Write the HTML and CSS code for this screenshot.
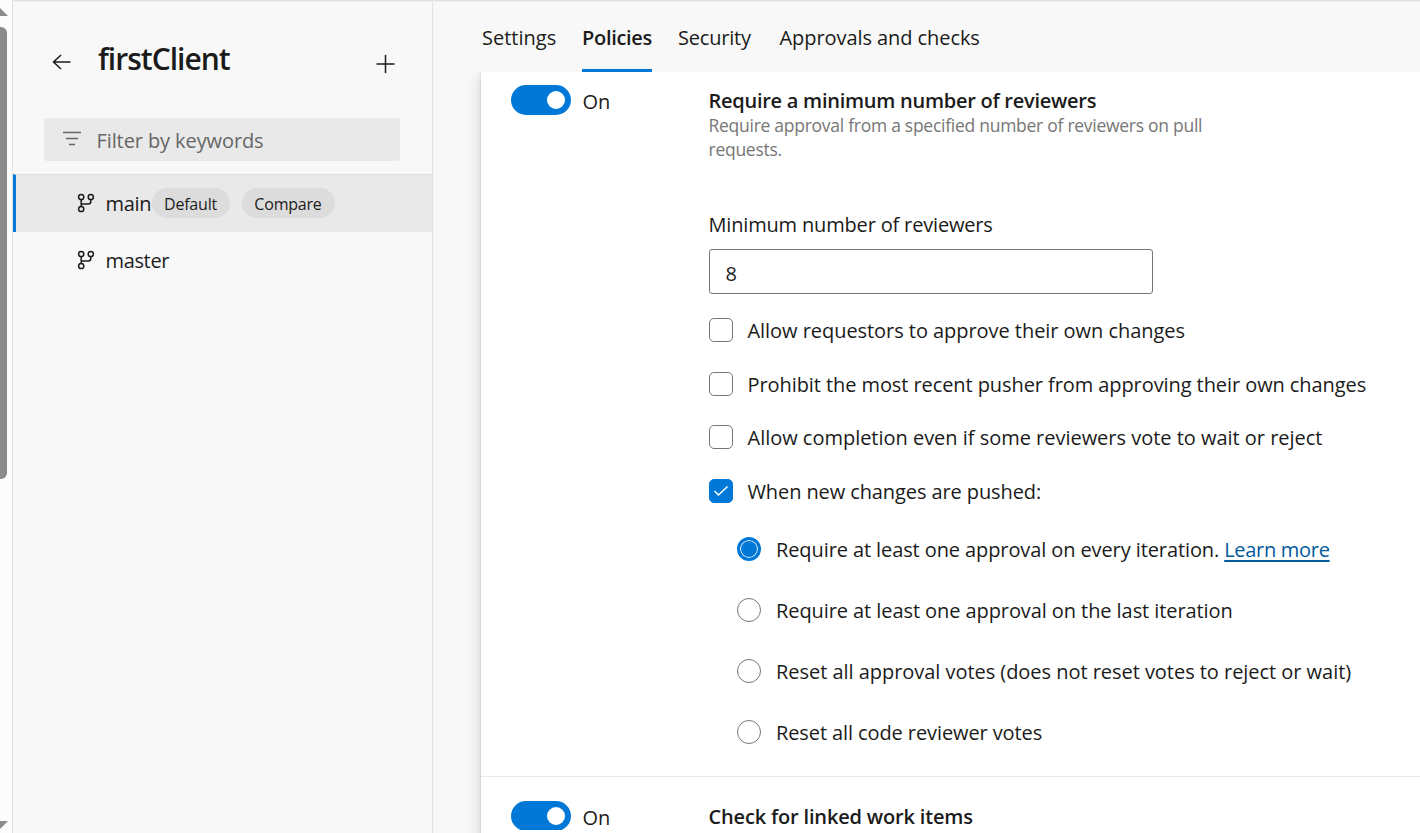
FILE: index.html
```
<!DOCTYPE html>
<html lang="en">
<head>
<meta charset="utf-8">
<title>firstClient - Branch policies</title>
<link rel="stylesheet" href="styles.css">
</head>
<body>
<div class="app">
  <div class="scrollbar">
    <svg class="scroll-up" width="8" height="8" viewBox="0 0 8 8"><path d="M0 0L8 8H0Z"/></svg>
    <div class="scroll-thumb"></div>
    <svg class="scroll-down" width="8" height="8" viewBox="0 0 8 8"><path d="M0 0H8L0 8Z"/></svg>
  </div>
  <aside class="sidebar">
    <header class="side-header">
      <svg class="back" width="20" height="16" viewBox="0 0 20 16"><path d="M18.5 8H1.5M9 1L1.5 8L9 15"/></svg>
      <h1 class="title"><span>firstClient</span></h1>
      <svg class="plus" width="20" height="20" viewBox="0 0 20 20"><path d="M.5 10H18.5M9.5 1V19"/></svg>
    </header>
    <div class="filter">
      <svg class="filter-icon" width="20" height="16" viewBox="0 0 20 16"><path d="M1 1.5H19M4 7.5H16M7 13.5H13"/></svg>
      <span class="placeholder">Filter by keywords</span>
    </div>
    <ul class="branches">
      <li class="branch selected">
        <svg class="branch-icon" width="18" height="20" viewBox="0 0 18 20"><circle cx="4.2" cy="4" r="2.6"/><circle cx="13.8" cy="4" r="2.6"/><circle cx="4.2" cy="16" r="2.6"/><path d="M4.2 6.7V13.3M13.8 6.7V8.5Q13.8 11 11.3 11H4.2"/></svg>
        <span class="branch-name main">main</span>
        <span class="pill default"><span>Default</span></span>
        <span class="pill compare"><span>Compare</span></span>
      </li>
      <li class="branch">
        <svg class="branch-icon" width="18" height="20" viewBox="0 0 18 20"><circle cx="4.2" cy="4" r="2.6"/><circle cx="13.8" cy="4" r="2.6"/><circle cx="4.2" cy="16" r="2.6"/><path d="M4.2 6.7V13.3M13.8 6.7V8.5Q13.8 11 11.3 11H4.2"/></svg>
        <span class="branch-name">master</span>
      </li>
    </ul>
  </aside>
  <main class="main-area">
    <nav class="tabs">
      <a class="tab settings">Settings</a>
      <a class="tab policies">Policies</a>
      <a class="tab security">Security</a>
      <a class="tab approvals">Approvals and checks</a>
    </nav>
    <div class="viewport">
      <div class="panel">
        <section class="policy">
          <div class="toggle-col"><span class="toggle"></span><span class="on">On</span></div>
          <div class="policy-body">
            <h2 class="policy-title minimum">Require a minimum number of reviewers</h2>
            <p class="desc">Require approval from a specified number of reviewers on pull<br>requests.</p>
            <label class="field-label">Minimum number of reviewers</label>
            <div class="number">8</div>
            <div class="checks">
              <div class="check"><span class="box"></span><span class="c1">Allow requestors to approve their own changes</span></div>
              <div class="check"><span class="box"></span><span class="c2">Prohibit the most recent pusher from approving their own changes</span></div>
              <div class="check"><span class="box"></span><span class="c3">Allow completion even if some reviewers vote to wait or reject</span></div>
              <div class="check"><span class="box checked"><svg width="16" height="12" viewBox="0 0 16 12"><path d="M1.5 6L5.5 10L14.5 1.5"/></svg></span><span class="c4">When new changes are pushed:</span></div>
            </div>
            <div class="radios">
              <div class="radio"><span class="ring active"></span><span class="r1">Require at least one approval on every iteration. <a class="link">Learn more</a></span></div>
              <div class="radio"><span class="ring"></span><span class="r2">Require at least one approval on the last iteration</span></div>
              <div class="radio"><span class="ring"></span><span class="r3">Reset all approval votes (does not reset votes to reject or wait)</span></div>
              <div class="radio"><span class="ring"></span><span class="r4">Reset all code reviewer votes</span></div>
            </div>
          </div>
        </section>
        <section class="policy linked">
          <div class="toggle-col"><span class="toggle"></span><span class="on">On</span></div>
          <div class="policy-body"><h2 class="policy-title check-linked">Check for linked work items</h2></div>
        </section>
      </div>
    </div>
  </main>
</div>
</body>
</html>
```
FILE: styles.css
```
* { box-sizing: border-box; }
body { margin: 0; background: #f8f8f8; color: #1b1b1b; font: 20px/28px "Open Sans", "Noto Sans", sans-serif; letter-spacing: -0.1px; }
h1, h2, p, ul { margin: 0; padding: 0; }
svg { display: block; flex: none; fill: none; stroke: #1b1b1b; stroke-width: 1.5; }
span, a, label { white-space: nowrap; }
.app { display: flex; width: 1420px; height: 833px; overflow: hidden; box-shadow: inset 0 1px #e0e0e0, inset 0 2px #f0f0f0; }
.scrollbar { width: 13px; flex: none; display: flex; flex-direction: column; padding-top: 8px; background: #fcfcfc; border-right: 1px solid #e1e1e1; }
.scrollbar svg { fill: #8b8b8b; stroke: none; }
.scroll-thumb { width: 7px; height: 452px; margin-top: 11px; background: #8b8b8b; border-radius: 0 6px 6px 0; }
.scroll-down { margin-top: 342px; }

.sidebar { width: 420px; flex: none; border-right: 1px solid #e1e1e1; }
.side-header { display: flex; height: 118px; padding-left: 39px; }
.back { margin-top: 54px; }
.title { width: 277px; margin: 38px 0 0 26px; font-size: 30px; line-height: 42px; font-weight: 600; letter-spacing: -1px; }
.plus { margin: 54px 0 0 1px; }
.filter { display: flex; align-items: center; width: 356px; height: 43px; margin-left: 31px; padding: 0 0 0 18px; background: #e9e9e9; border-radius: 3px; color: #666; }
.filter-icon { stroke: #666; margin-top: -2px; }
.placeholder { margin: 2px 0 0 14.5px; }
.branches { margin-top: 13px; list-style: none; }
.branch { display: flex; align-items: center; height: 56px; padding-left: 64px; }
.branch.selected { height: 58px; padding-left: 61px; background: #e9e9e9; border-top: 1px solid #e0e0e0; border-left: 3px solid #0078d7; }
.branch-icon { margin-top: -1px; }
.branch-name { margin: 2px 0 0 10.5px; letter-spacing: -.35px; }
.branch-name.main { width: 46px; margin-top: 1px; }
.pill { display: flex; justify-content: center; align-items: center; height: 30px; border-radius: 15px; background: #dcdcdc; font-size: 16px; margin-top: -1px; }
.pill span { margin-top: 2px; }
.default { width: 78px; letter-spacing: -.2px; }
.compare { width: 93px; margin-left: 12px; letter-spacing: -.2px; }

.main-area { flex: 1; display: flex; flex-direction: column; min-width: 0; }
.tabs { display: flex; height: 72px; flex: none; padding: 24px 0 0 49px; }
.tab { height: 48px; flex: none; }
.settings { width: 100px; letter-spacing: 0; }
.policies { width: 70px; margin-right: 26px; font-weight: 600; letter-spacing: -.3px; border-bottom: 3px solid #0078d7; }
.security { width: 101.5px; letter-spacing: -.2px; }
.approvals { letter-spacing: -.07px; }
.viewport { flex: 1; overflow: hidden; padding-left: 48px; }
.panel { height: 800px; background: #fff; box-shadow: 0 4px 14px rgba(0,0,0,.16), 0 0 2px rgba(0,0,0,.18); }
.policy { display: flex; height: 705px; padding: 13px 0 0 30px; border-bottom: 1px solid #e9e9e9; }
.policy.linked { padding-top: 24px; border: 0; }
.linked .toggle { clip-path: inset(0 0 1px 0); }
.toggle-col { display: flex; align-items: flex-start; width: 197.5px; flex: none; }
.toggle { width: 60px; height: 30px; border-radius: 15px; background: #0078d7; display: flex; justify-content: flex-end; align-items: center; padding-right: 6px; }
.toggle::after { content: ""; width: 18px; height: 18px; border-radius: 50%; background: #fff; }
.on { margin: 3px 0 0 11.5px; }
.policy-title { font-size: 20px; line-height: 28px; font-weight: 600; margin-top: 2px; white-space: nowrap; letter-spacing: -.26px; }
.check-linked { letter-spacing: -.17px; }
.desc { font-size: 17.5px; line-height: 24px; color: #767676; margin-top: -2px; letter-spacing: -.27px; }
.field-label { display: block; margin-top: 50px; letter-spacing: -.17px; }
.number { width: 444px; height: 45px; margin-top: 10px; border: 1px solid #767676; border-radius: 3px; padding: 10px 16px; }
.checks { margin-top: 9px; }
.check { display: flex; align-items: center; height: 53.7px; gap: 15px; }
.check > span:last-child, .radio > span:last-child { margin-top: 2px; }
.c1 { letter-spacing: -.05px; }
.c2 { letter-spacing: -.08px; }
.c3 { letter-spacing: -.02px; }
.box { width: 24px; height: 24px; flex: none; border: 1px solid #767676; border-radius: 5px; }
.checked { display: flex; align-items: center; justify-content: center; background: #0078d7; border-color: #0078d7; }
.checked svg { stroke: #fff; }
.radios { padding: 1px 0 0 28px; }
.radio { display: flex; align-items: center; height: 61px; gap: 15.5px; }
.r2 { letter-spacing: -.08px; }
.r3 { letter-spacing: -.04px; }
.ring { width: 24px; height: 24px; flex: none; border: 1px solid #767676; border-radius: 50%; }
.active { border: 3px solid #0078d7; background: #0078d7; box-shadow: inset 0 0 0 1px #fff; }
.link { color: #005a9e; text-decoration: underline; text-decoration-thickness: 2px; text-underline-offset: 3px; letter-spacing: -.3px; }
```
